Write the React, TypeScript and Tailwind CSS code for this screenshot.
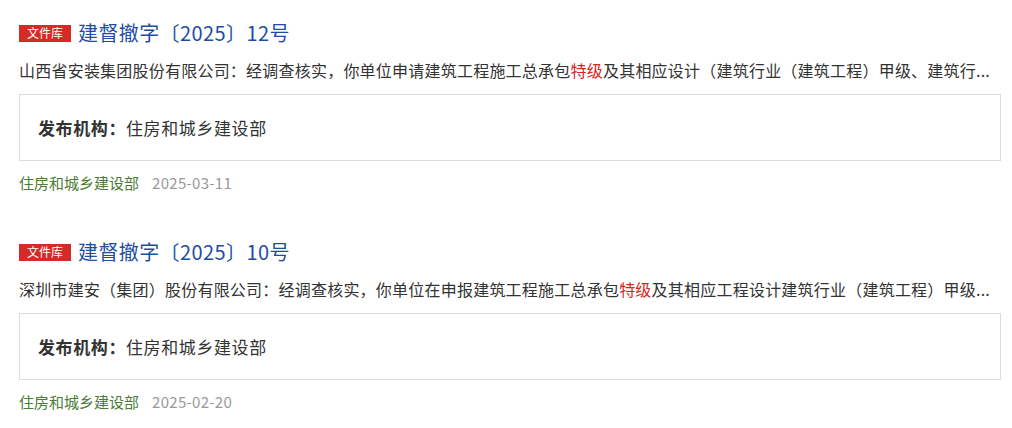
const items = [
  {
    title: "建督撤字〔2025〕12号",
    before: "山西省安装集团股份有限公司：经调查核实，你单位申请建筑工程施工总承包",
    after: "及其相应设计（建筑行业（建筑工程）甲级、建筑行...",
    org: "住房和城乡建设部",
    date: "2025-03-11",
  },
  {
    title: "建督撤字〔2025〕10号",
    before: "深圳市建安（集团）股份有限公司：经调查核实，你单位在申报建筑工程施工总承包",
    after: "及其相应工程设计建筑行业（建筑工程）甲级...",
    org: "住房和城乡建设部",
    date: "2025-02-20",
  },
];

function ResultItem({ item }: { item: (typeof items)[number] }) {
  return (
    <div className="flex flex-col">
      <div className="flex h-[28px] items-center gap-[7px]">
        <span className="flex h-[17px] w-[52px] items-center justify-center bg-[#d42b27] text-[12px] leading-none text-white">
          文件库
        </span>
        <a className="text-[20px] leading-[28px] tracking-[0.4px] text-[#1d4ea2]">{item.title}</a>
      </div>
      <p className="mt-[11px] whitespace-nowrap text-[16px] leading-[24px] tracking-[0.22px] text-[#333]">
        {item.before}
        <span className="text-[#d9251d]">特级</span>
        {item.after}
      </p>
      <div className="mt-[12px] flex h-[67px] items-center border border-[#dcdcdc] px-[18px] text-[17px] tracking-[0.6px] text-[#333]">
        <span className="font-bold">发布机构：</span>
        <span>{item.org}</span>
      </div>
      <div className="mt-[11px] flex h-[22px] items-center gap-[13px] text-[15px]">
        <span className="text-[#4b7b35]">{item.org}</span>
        <span className="tracking-[0.3px] text-[#999]">{item.date}</span>
      </div>
    </div>
  );
}

export default function App() {
  return (
    <div
      className="flex h-[428px] w-[1012px] flex-col gap-[44px] bg-white pl-[19px] pr-[11px] pt-[19px]"
      style={{ fontFamily: '"Noto Sans CJK SC", "Noto Sans", sans-serif' }}
    >
      {items.map((item) => (
        <ResultItem key={item.title} item={item} />
      ))}
    </div>
  );
}
